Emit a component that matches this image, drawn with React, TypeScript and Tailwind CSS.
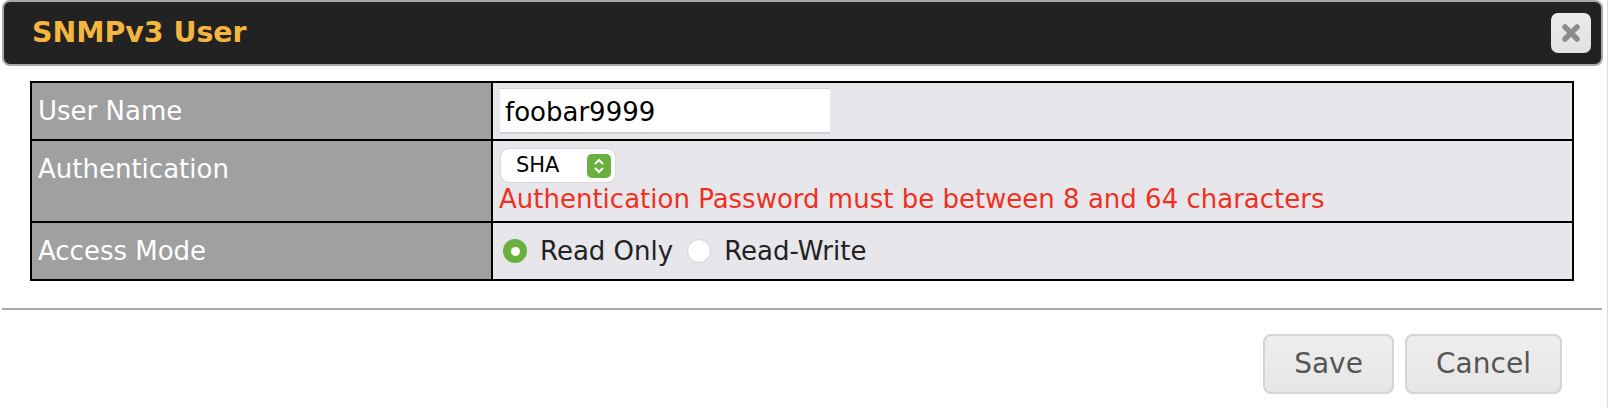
const font = "[font-family:'DejaVu_Sans',Verdana,sans-serif]";

function Row({ label, children, last }: { label: string; children: React.ReactNode; last?: boolean }) {
	return (
		<div className={`flex ${last ? "h-[56px]" : ""}`}>
			<div className="w-[461px] shrink-0 bg-[#a0a0a0] border-r-2 border-black px-[6px] pt-[10px] text-[26px] leading-[37px] text-white">
				{label}
			</div>
			<div className="flex-1 bg-[#e6e6eb] px-[7px]">{children}</div>
		</div>
	);
}

export default function App() {
	return (
		<div className={`${font} w-[1608px] h-[408px] bg-white border-r border-[#dddddd] overflow-hidden`}>
			{/* Title bar */}
			<div className="mx-[2px] mt-0 h-[66px] w-[1601px] bg-[#222222] border-2 border-[#a8a8a8] rounded-[8px] flex items-center justify-between pl-[28px] pr-[10px]">
				<span className="text-[28.4px] font-bold text-[#f5b63f] leading-none">SNMPv3 User</span>
				<button className="w-[40px] h-[40px] rounded-[7px] bg-linear-to-b from-[#ebebeb] to-[#e2e2e2] flex items-center justify-center">
					<svg width="20" height="20" viewBox="0 0 20 20">
						<path d="M4 4 L16 16 M16 4 L4 16" stroke="#8c8c8c" strokeWidth="5.5" strokeLinecap="round" />
					</svg>
				</button>
			</div>

			{/* Form table */}
			<div className="ml-[30px] mt-[15px] w-[1544px] border-2 border-black divide-y-2 divide-black">
				<Row label="User Name">
					<div className="h-[56px] pt-[5px]">
						<div className="w-[330px] h-[46px] bg-white border-t border-b-2 border-[#cfcfd4] px-[5px] text-[26px] leading-[47px] text-black">
							foobar9999
						</div>
					</div>
				</Row>
				<Row label="Authentication">
					<div className="h-[80px] pt-[8px]">
						<div className="w-[114px] h-[33px] bg-white rounded-[8px] shadow-[0_0_2px_rgba(0,0,0,0.2)] flex items-center justify-between pl-[15px] pr-[4px] ml-[1px]">
							<span className="text-[21px] text-black leading-none">SHA</span>
							<span className="w-[24px] h-[24px] rounded-[5px] bg-[#69b03e] flex items-center justify-center">
								<svg width="14" height="18" viewBox="0 0 14 18" fill="none" stroke="white" strokeWidth="2">
									<path d="M3 7 L7 3 L11 7 M3 11 L7 15 L11 11" />
								</svg>
							</span>
						</div>
						<div className="-mt-[1px] -ml-[1px] text-[26px] leading-[36px] text-[#f0301f] whitespace-nowrap">
							Authentication Password must be between 8 and 64 characters
						</div>
					</div>
				</Row>
				<Row label="Access Mode" last>
					<div className="h-full flex items-center pl-[3px] text-[26px] text-[#222222]">
						<span className="w-[24px] h-[24px] rounded-full bg-[#69b03e] flex items-center justify-center">
							<span className="w-[9px] h-[9px] rounded-full bg-white" />
						</span>
						<span className="ml-[13px]">Read Only</span>
						<span className="ml-[14px] w-[24px] h-[24px] rounded-full bg-white border border-[#d4d4d4]" />
						<span className="ml-[13px]">Read-Write</span>
					</div>
				</Row>
			</div>

			{/* Divider */}
			<div className="ml-[2px] mt-[27px] w-[1600px] h-[2px] bg-[#aaaaaa]" />

			{/* Footer buttons */}
			<div className="flex justify-end gap-[11px] mt-[24px] pr-[45px]">
				<button className="w-[131px] h-[60px] rounded-[8px] border-2 border-[#d4d4d4] bg-linear-to-b from-[#eeeeee] to-[#e6e6e6] text-[28px] text-[#555555]">
					Save
				</button>
				<button className="w-[157px] h-[60px] rounded-[8px] border-2 border-[#d4d4d4] bg-linear-to-b from-[#eeeeee] to-[#e6e6e6] text-[28px] text-[#555555]">
					Cancel
				</button>
			</div>
		</div>
	);
}
